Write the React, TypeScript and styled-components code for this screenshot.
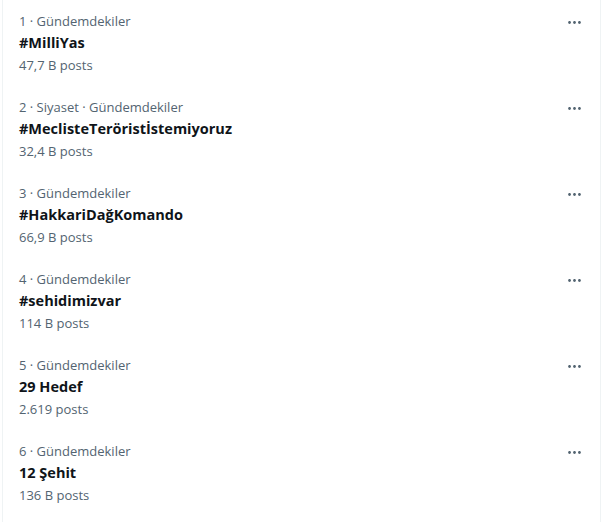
import React from "react";
import styled, { createGlobalStyle } from "styled-components";

const Global = createGlobalStyle`
  html, body { margin: 0; padding: 0; background: #ffffff; }
  body { font-family: "Open Sans", "Noto Sans", "Liberation Sans", sans-serif; }
`;

const Panel = styled.div`
  margin-left: 2px;
  width: 599px;
  height: 522px;
  border-left: 1px solid #eff3f4;
  border-right: 1px solid #eff3f4;
  box-sizing: border-box;
`;

const Row = styled.div`
  display: flex;
  justify-content: space-between;
  align-items: flex-start;
  height: 86px;
  padding: 10px 16px 10px 16px;
  box-sizing: border-box;
`;

const Info = styled.div`
  display: flex;
  flex-direction: column;
`;

const Meta = styled.div`
  font-size: 13px;
  line-height: 22px;
  color: #536471;
`;

const Title = styled.div`
  font-size: 14.5px;
  line-height: 22px;
  font-weight: 700;
  color: #0f1419;
`;

const MoreButton = styled.div`
  width: 17px;
  height: 17px;
  margin-top: 4px;
  margin-right: 1px;
  color: #536471;
  display: flex;
`;

const trends = [
  { meta: "1 · Gündemdekiler", title: "#MilliYas", posts: "47,7 B posts" },
  { meta: "2 · Siyaset · Gündemdekiler", title: "#MeclisteTerörist\u0130stemiyoruz", posts: "32,4 B posts" },
  { meta: "3 · Gündemdekiler", title: "#HakkariDağKomando", posts: "66,9 B posts" },
  { meta: "4 · Gündemdekiler", title: "#sehidimizvar", posts: "114 B posts" },
  { meta: "5 · Gündemdekiler", title: "29 Hedef", posts: "2.619 posts" },
  { meta: "6 · Gündemdekiler", title: "12 Şehit", posts: "136 B posts" },
];

const MoreIcon = () => (
  <svg viewBox="0 0 24 24" width="17" height="17" fill="currentColor">
    <path d="M3 12c0-1.1.9-2 2-2s2 .9 2 2-.9 2-2 2-2-.9-2-2zm9 2c1.1 0 2-.9 2-2s-.9-2-2-2-2 .9-2 2 .9 2 2 2zm7 0c1.1 0 2-.9 2-2s-.9-2-2-2-2 .9-2 2 .9 2 2 2z" />
  </svg>
);

export default function App() {
  return (
    <>
      <Global />
      <Panel>
        {trends.map((t) => (
          <Row key={t.title}>
            <Info>
              <Meta>{t.meta}</Meta>
              <Title>{t.title}</Title>
              <Meta>{t.posts}</Meta>
            </Info>
            <MoreButton>
              <MoreIcon />
            </MoreButton>
          </Row>
        ))}
      </Panel>
    </>
  );
}
